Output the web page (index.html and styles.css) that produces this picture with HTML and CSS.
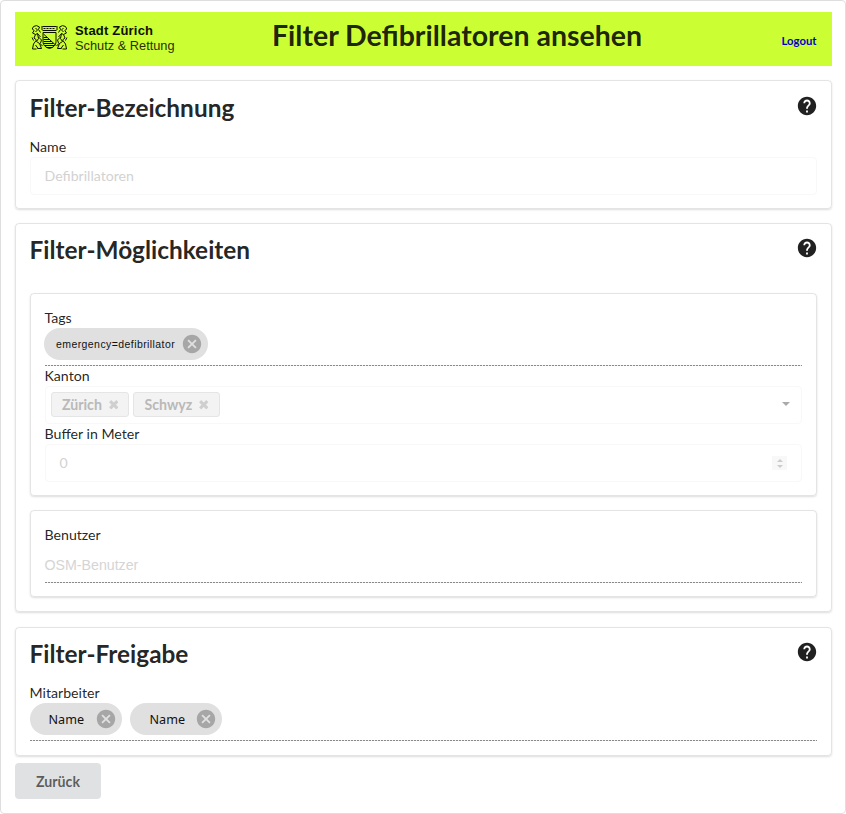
FILE: index.html
```html
<!DOCTYPE html>
<html lang="de">
<head>
<meta charset="utf-8">
<title>Filter Defibrillatoren ansehen</title>
<link rel="stylesheet" href="styles.css">
</head>
<body>
<svg class="defs" width="0" height="0">
  <symbol id="help" viewBox="0 0 24 24"><path fill="currentColor" d="M12 2C6.48 2 2 6.48 2 12s4.48 10 10 10 10-4.48 10-10S17.52 2 12 2zm1 17h-2v-2h2v2zm2.07-7.75l-.9.92C13.45 12.9 13 13.5 13 15h-2v-.5c0-1.1.45-2.1 1.17-2.83l1.24-1.26c.37-.36.59-.86.59-1.41 0-1.1-.9-2-2-2s-2 .9-2 2H8c0-2.21 1.79-4 4-4s4 1.79 4 4c0 .88-.36 1.68-.93 2.25z"/></symbol>
  <symbol id="cancel" viewBox="0 0 24 24"><path fill="currentColor" d="M12 2C6.47 2 2 6.47 2 12s4.47 10 10 10 10-4.47 10-10S17.53 2 12 2zm5 13.59L15.59 17 12 13.41 8.41 17 7 15.59 10.59 12 7 8.41 8.41 7 12 10.59 15.59 7 17 8.41 13.41 12 17 15.59z"/></symbol>
  <symbol id="times" viewBox="0 0 10 10"><path stroke="currentColor" stroke-width="3.2" d="M1.2 1.2l7.6 7.6M8.8 1.2L1.2 8.8"/></symbol>
</svg>
<main class="page">
  <header class="banner">
    <div class="brand">
      <svg class="crest" viewBox="0 0 36 26" fill="none" stroke="#0b1000" stroke-width="1">
        <path d="M11 1.500h14M10.500 1v4M25.500 1v4M11 5.500h14"/>
        <path d="M12 3.500h12" stroke-dasharray="2 1"/>
        <path d="M11.500 7.500h13v9c0 4-3 6-6.500 7-3.500-1-6.500-3-6.500-7z"/>
        <path d="M12 9l12 11M12 12.500h3.500M12 14.500h6M12 16.500h8M12 18.500h10M13 20.500h10M15 22.500h6"/>
        <g id="lion">
          <path d="M9 7.500L7 4.500 8 2 5 .6 2 1.500.7 4l2 1.500L1 8l3 1.500 2-1L9 12M4 9.500L2.500 13 5 15l-3 4-1 5h4M6 8.500l1 5-2 3 3 2 2 5H6M8 18l3 3M4 3l2 2-2 2M2 15.500L.6 12.500M7 12l3 3-1 3M4 20l3 4"/>
        </g>
        <use href="#lion" transform="translate(36 0) scale(-1 1)"/>
      </svg>
      <div class="brand-text"><b>Stadt Zürich</b><span>Schutz &amp; Rettung</span></div>
    </div>
    <h1>Filter Defibrillatoren ansehen</h1>
    <a class="logout" href="#">Logout</a>
  </header>

  <section class="card">
    <div class="card-head"><h2>Filter-Bezeichnung</h2><svg class="help"><use href="#help"/></svg></div>
    <div class="label">Name</div>
    <div class="input">Defibrillatoren</div>
  </section>

  <section class="card options">
    <div class="card-head"><h2>Filter-Möglichkeiten</h2><svg class="help"><use href="#help"/></svg></div>
    <div class="card inner">
      <div class="label">Tags</div>
      <div class="chips tags">
        <span class="chip small"><span>emergency=defibrillator</span><svg><use href="#cancel"/></svg></span>
      </div>
      <div class="label">Kanton</div>
      <div class="input select">
        <span class="token">Zürich<svg><use href="#times"/></svg></span>
        <span class="token">Schwyz<svg><use href="#times"/></svg></span>
        <i class="caret"></i>
      </div>
      <div class="label">Buffer in Meter</div>
      <div class="input number"><span>0</span><div class="spinner"><i class="up"></i><i class="down"></i></div></div>
    </div>
    <div class="card inner">
      <div class="label">Benutzer</div>
      <div class="user">OSM-Benutzer</div>
    </div>
  </section>

  <section class="card share">
    <div class="card-head"><h2>Filter-Freigabe</h2><svg class="help"><use href="#help"/></svg></div>
    <div class="label">Mitarbeiter</div>
    <div class="chips">
      <span class="chip"><span>Name</span><svg><use href="#cancel"/></svg></span>
      <span class="chip second"><span>Name</span><svg><use href="#cancel"/></svg></span>
    </div>
  </section>
  <button class="back">Zurück</button>
</main>
</body>
</html>
```
FILE: styles.css
```css
* { box-sizing: border-box; }
body { margin: 0; background: #fff; color: rgba(0,0,0,.87); font: 14.150px/20px Lato, sans-serif; }
.defs { position: absolute; }
.page { height: 814px; padding: 11px 13px 0 14px; border: 1px solid #dedede; border-radius: 4px; }
h1, h2 { margin: 0; font-weight: 700; }
.banner { display: flex; justify-content: space-between; height: 54px; margin-bottom: 14px; background: #ccff33; }
.brand { display: flex; width: 257px; padding: 13px 0 0 16px; gap: 7px; }
.crest { width: 37px; height: 26px; }
.brand-text { display: flex; flex-direction: column; font: 13px/14px "Liberation Sans", sans-serif; color: #0b1000; white-space: nowrap; margin-top: -1px; }
.brand-text b { letter-spacing: .2px; }
.brand-text span { color: #283205; letter-spacing: 0; font-size: 12.800px; line-height: 15px; }
h1 { font-size: 28.500px; line-height: 36px; padding-top: 5px; white-space: nowrap; }
.logout { margin: 19px 15.500px 0 auto; color: #00c; font-size: 11.300px; font-weight: 700; text-decoration: none; }
.card { padding: 14px 14px 13px 13.500px; margin-bottom: 14px; border: 1px solid rgba(34,36,38,.12); border-radius: 4px; box-shadow: 0 1px 2px rgba(34,36,38,.15); }
.card-head { display: flex; justify-content: space-between; height: 42px; }
.card-head h2 { font-size: 24.400px; line-height: 28px; margin-top: -1px; }
.help { width: 22px; height: 22px; margin-right: -.5px; color: #212121; }
.options { padding-bottom: 14px; margin-bottom: 15px; }
.options .card-head { height: 55px; }
.options .card-head h2 { margin-top: -2px; }
.options .help { margin-top: -1px; }
.share { padding-bottom: 14px; }
.share .card-head { height: 41px; }
.share .card-head h2 { margin-top: -2px; }
.share .help { margin-top: -1px; }
.inner { padding-left: 14px; margin-bottom: 14px; }
.inner:last-child { margin-bottom: 0; }
.label { height: 20px; }
.input { display: flex; align-items: center; height: 38px; padding: 0 14px; border: 1px solid #f8f8f8; border-radius: 4px; color: #d2d2d2; }
.select { padding: 0 11px 2px 5.500px; gap: 4px; }
.token { display: flex; align-items: center; gap: 7px; height: 25px; padding: 2px 10px 0; border: 1px solid #e5e5e5; border-radius: 3px; background: #f3f3f3; color: #b9b9b9; font-weight: 700; }
.token svg { width: 9.500px; height: 9.500px; color: #cfcfcf; }
.caret { margin-left: auto; border: 4px solid transparent; border-top-color: #aaa; border-bottom: 0; }
.number { justify-content: space-between; }
.spinner { display: flex; flex-direction: column; justify-content: center; align-items: center; gap: 3px; width: 15px; height: 14px; background: #f8f8f8; }
.spinner i { border: 3px solid transparent; }
.spinner .up { border-bottom-color: #ccc; border-top: 0; }
.spinner .down { border-top-color: #ccc; border-bottom: 0; }
.chips, .user { background: repeating-linear-gradient(90deg, #8a8a8a 0 2px, #eee 2px 3px) bottom / 100% 1px no-repeat; }
.chips { display: flex; gap: 8px; height: 38px; }
.chip { display: flex; align-items: center; justify-content: space-between; width: 92px; height: 32px; padding: 0 5px 0 19px; border-radius: 16px; background: #e0e0e0; font: 12.600px "Noto Sans", sans-serif; color: #111; }
.chip svg { width: 22px; height: 22px; color: #a6a6a6; }
.chip.second { padding-left: 20px; }
.chip.small { width: 164px; margin-left: -.5px; padding-left: 12px; font: 10.500px "Liberation Sans", sans-serif; letter-spacing: .42px; }
.user { height: 38px; padding-top: 10px; color: #d5d5d5; font: 14.200px/20px "Liberation Sans", sans-serif; }
.back { display: block; width: 86px; height: 36px; margin-top: -7px; padding: 0; border: 0; border-radius: 4px; background: #e0e1e2; color: rgba(0,0,0,.6); font: 700 14.200px Lato, sans-serif; }
```
